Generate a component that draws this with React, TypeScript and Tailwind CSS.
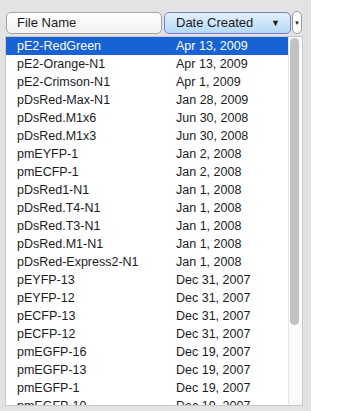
import React from "react";

type Row = { name: string; date: string };

const rows: Row[] = [
  { name: "pE2-RedGreen", date: "Apr 13, 2009" },
  { name: "pE2-Orange-N1", date: "Apr 13, 2009" },
  { name: "pE2-Crimson-N1", date: "Apr 1, 2009" },
  { name: "pDsRed-Max-N1", date: "Jan 28, 2009" },
  { name: "pDsRed.M1x6", date: "Jun 30, 2008" },
  { name: "pDsRed.M1x3", date: "Jun 30, 2008" },
  { name: "pmEYFP-1", date: "Jan 2, 2008" },
  { name: "pmECFP-1", date: "Jan 2, 2008" },
  { name: "pDsRed1-N1", date: "Jan 1, 2008" },
  { name: "pDsRed.T4-N1", date: "Jan 1, 2008" },
  { name: "pDsRed.T3-N1", date: "Jan 1, 2008" },
  { name: "pDsRed.M1-N1", date: "Jan 1, 2008" },
  { name: "pDsRed-Express2-N1", date: "Jan 1, 2008" },
  { name: "pEYFP-13", date: "Dec 31, 2007" },
  { name: "pEYFP-12", date: "Dec 31, 2007" },
  { name: "pECFP-13", date: "Dec 31, 2007" },
  { name: "pECFP-12", date: "Dec 31, 2007" },
  { name: "pmEGFP-16", date: "Dec 19, 2007" },
  { name: "pmEGFP-13", date: "Dec 19, 2007" },
  { name: "pmEGFP-1", date: "Dec 19, 2007" },
  { name: "pmEGFP-10", date: "Dec 19, 2007" },
];

export default function App() {
  return (
    <div className="flex w-[360px] h-[411px] overflow-hidden bg-white font-['Liberation_Sans',Arial,sans-serif] text-[12.5px] text-[#1b1b1b]">
      <div className="flex flex-col w-[311px] h-full bg-[#e3e3e3] pl-[5px]">
        {/* header */}
        <div className="flex items-start h-[24px] mt-[11px] pl-[1px]">
          <div className="mt-[1px] flex items-center w-[156px] h-[22px] pl-[10px] rounded-[5px] border border-[#a3a3a3] bg-gradient-to-b from-white to-[#f1f1f1] text-[13px]">
            File Name
          </div>
          <div className="mt-[1px] ml-[2px] flex items-center justify-between w-[127px] h-[22px] pl-[11px] pr-[10px] rounded-[5px] border border-[#7e7fcf] bg-gradient-to-b from-[#e3f1fd] to-[#b4d9f7] text-[13px]">
            <span>Date Created</span>
            <span className="text-[9px] leading-none">▼</span>
          </div>
          <div className="ml-[1px] flex items-center justify-center w-[10px] h-[23px] rounded-full border border-[#9a9a9a] bg-white">
            <span className="text-[6px] leading-none">▼</span>
          </div>
        </div>

        {/* list */}
        <div className="mt-[1px] flex w-[298px] h-[370px] border border-[#c9c9c9] bg-white overflow-hidden">
          <div className="flex-1 flex flex-col overflow-hidden">
            {rows.map((r, i) => (
              <div
                key={r.name}
                className={`flex items-center shrink-0 h-[18px] pl-[11px] ${i === 0 ? "bg-[#1763d6] text-white" : ""}`}
              >
                <span className="w-[159px] whitespace-nowrap">{r.name}</span>
                <span className="whitespace-nowrap">{r.date}</span>
              </div>
            ))}
          </div>
          <div className="w-[14px] h-full border-l border-[#e6e6e6] bg-[#fafafa] pt-[1px] pl-[1px]">
            <div className="w-[9px] h-[287px] rounded-full bg-[#c2c2c2]" />
          </div>
        </div>
      </div>
    </div>
  );
}
